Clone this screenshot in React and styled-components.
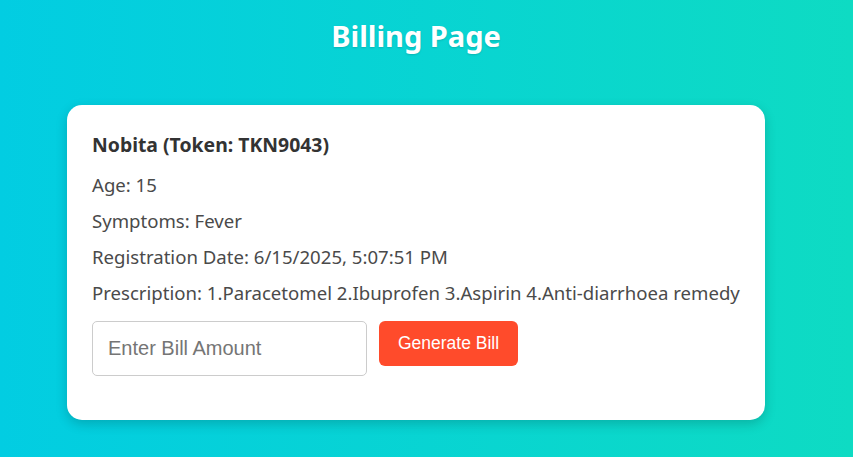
import React from "react";
import styled, { createGlobalStyle } from "styled-components";

const Global = createGlobalStyle`
  html, body { margin: 0; padding: 0; height: 100%; }
  body {
    font-family: "Noto Sans", "Open Sans", sans-serif;
    background: linear-gradient(to right, #02cde2, #0edbc3);
    min-height: 457px;
  }
`;

const Page = styled.div`
  display: flex;
  flex-direction: column;
  align-items: center;
  padding: 17px 21px 0 0;
`;

const Title = styled.h1`
  margin: 0 0 50px;
  font-size: 29px;
  font-weight: 700;
  color: #ffffff;
  line-height: 38px;
  text-shadow: 0 1px 2px rgba(0, 0, 0, 0.15);
`;

const Card = styled.div`
  width: 698px;
  box-sizing: border-box;
  background: #ffffff;
  border-radius: 15px;
  padding: 27px 25px 44px;
  box-shadow: 0 4px 12px rgba(0, 0, 0, 0.18);
`;

const Name = styled.h3`
  margin: 0 0 14px;
  font-size: 19.4px;
  font-weight: 700;
  color: #333333;
  line-height: 26px;
`;

const Info = styled.p`
  margin: 0 0 10px;
  font-size: 18.6px;
  line-height: 26px;
  color: #4a4a4a;
`;

const Row = styled.div`
  display: flex;
  align-items: flex-start;
  gap: 12px;
  margin-top: 15px;
`;

const Input = styled.input`
  width: 275px;
  height: 55px;
  box-sizing: border-box;
  border: 1px solid #cccccc;
  border-radius: 5px;
  padding: 0 15px;
  font-family: "Liberation Sans", Arial, sans-serif;
  font-size: 20px;
  color: #333;
  outline: none;
  &::placeholder { color: #757575; }
`;

const Button = styled.button`
  height: 45px;
  width: 139px;
  border: none;
  border-radius: 6px;
  background: #ff4b2b;
  color: #ffffff;
  font-family: "Liberation Sans", Arial, sans-serif;
  font-size: 17.5px;
  cursor: pointer;
`;

export default function App() {
  return (
    <>
      <Global />
      <Page>
        <Title>Billing Page</Title>
        <Card>
          <Name>Nobita (Token: TKN9043)</Name>
          <Info>Age: 15</Info>
          <Info>Symptoms: Fever</Info>
          <Info>Registration Date: 6/15/2025, 5:07:51 PM</Info>
          <Info>Prescription: 1.Paracetomel 2.Ibuprofen 3.Aspirin 4.Anti-diarrhoea remedy</Info>
          <Row>
            <Input placeholder="Enter Bill Amount" />
            <Button>Generate Bill</Button>
          </Row>
        </Card>
      </Page>
    </>
  );
}
